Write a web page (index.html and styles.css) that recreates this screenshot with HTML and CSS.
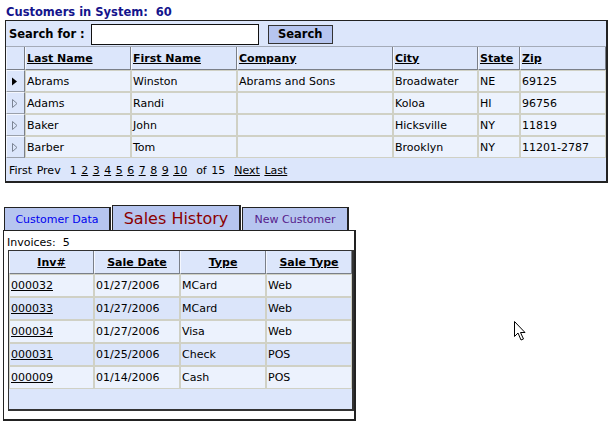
FILE: index.html
```html
<!DOCTYPE html>
<html>
<head>
<meta charset="utf-8">
<title>Customers</title>
<link rel="stylesheet" href="styles.css">
</head>
<body>
<div class="page">
  <div class="title">Customers in System:&nbsp; 60</div>
  <div class="grid">
    <div class="search">
      <span class="search-label">Search for :</span>
      <span class="search-input"></span>
      <span class="search-btn">Search</span>
    </div>
    <table class="cust">
      <colgroup>
        <col class="w-sel"><col class="w-last"><col class="w-first"><col class="w-company"><col class="w-city"><col class="w-state"><col class="w-zip">
      </colgroup>
      <thead>
        <tr><th class="sel"></th><th><u>Last Name</u></th><th><u>First Name</u></th><th><u>Company</u></th><th><u>City</u></th><th><u>State</u></th><th><u>Zip</u></th></tr>
      </thead>
      <tbody>
        <tr><td class="sel"><svg class="tri" width="6" height="9" viewBox="0 0 6 9"><polygon points="0,0.5 5,4.5 0,8.5" fill="#000"/></svg></td><td>Abrams</td><td>Winston</td><td>Abrams and Sons</td><td>Broadwater</td><td>NE</td><td>69125</td></tr>
        <tr><td class="sel"><svg class="tri" width="6" height="9" viewBox="0 0 6 9"><polygon points="0.5,0.5 5,4.5 0.5,8.5" fill="none" stroke="#7c8494"/></svg></td><td>Adams</td><td>Randi</td><td></td><td>Koloa</td><td>HI</td><td>96756</td></tr>
        <tr><td class="sel"><svg class="tri" width="6" height="9" viewBox="0 0 6 9"><polygon points="0.5,0.5 5,4.5 0.5,8.5" fill="none" stroke="#7c8494"/></svg></td><td>Baker</td><td>John</td><td></td><td>Hicksville</td><td>NY</td><td>11819</td></tr>
        <tr><td class="sel"><svg class="tri" width="6" height="9" viewBox="0 0 6 9"><polygon points="0.5,0.5 5,4.5 0.5,8.5" fill="none" stroke="#7c8494"/></svg></td><td>Barber</td><td>Tom</td><td></td><td>Brooklyn</td><td>NY</td><td>11201-2787</td></tr>
      </tbody>
      <tfoot>
        <tr><td class="pager" colspan="7">First Prev&nbsp; 1 <u>2</u> <u>3</u> <u>4</u> <u>5</u> <u>6</u> <u>7</u> <u>8</u> <u>9</u> <u>10</u>&nbsp; of 15&nbsp; <u>Next</u> <u>Last</u></td></tr>
      </tfoot>
    </table>
  </div>

  <div class="tabs">
    <div class="tab tab-data">Customer Data</div>
    <div class="tab tab-active">Sales History</div>
    <div class="tab tab-new">New Customer</div>
  </div>
  <div class="panel">
    <div class="inv-count">Invoices:&nbsp; 5</div>
    <table class="inv">
      <colgroup><col class="w-inv"><col class="w-col"><col class="w-col"><col class="w-col"></colgroup>
      <thead>
        <tr><th><u>Inv#</u></th><th><u>Sale Date</u></th><th><u>Type</u></th><th><u>Sale Type</u></th></tr>
      </thead>
      <tbody>
        <tr><td><u>000032</u></td><td>01/27/2006</td><td>MCard</td><td>Web</td></tr>
        <tr class="alt"><td><u>000033</u></td><td>01/27/2006</td><td>MCard</td><td>Web</td></tr>
        <tr><td><u>000034</u></td><td>01/27/2006</td><td>Visa</td><td>Web</td></tr>
        <tr class="alt"><td><u>000031</u></td><td>01/25/2006</td><td>Check</td><td>POS</td></tr>
        <tr><td><u>000009</u></td><td>01/14/2006</td><td>Cash</td><td>POS</td></tr>
      </tbody>
      <tfoot>
        <tr><td colspan="4"></td></tr>
      </tfoot>
    </table>
  </div>
</div>
<svg class="cursor" width="13" height="21" viewBox="0 0 13 21"><path d="M0.5 0.5 L0.5 15.5 L4 12 L7 19 L9.5 18 L6.5 11.5 L11 11.5 Z" fill="#fff" stroke="#000" stroke-linejoin="miter"/></svg>
</body>
</html>
```

FILE: styles.css
```css
* { box-sizing: border-box; }
html, body { margin: 0; padding: 0; background: #fff; }
body {
  font-family: "DejaVu Sans", Verdana, sans-serif;
  font-size: 11px;
  color: #000;
  position: relative;
  width: 610px;
  height: 423px;
  overflow: hidden;
}
u { text-decoration: underline; }

.page { padding: 4px 0 0 5px; }

.title {
  font-weight: bold;
  font-size: 11.5px;
  color: #14148c;
  height: 16px;
  line-height: 16px;
  margin-left: 1px;
}

.grid {
  width: 603px;
  border: 1px solid #222;
  border-right-width: 2px;
  border-bottom-width: 2px;
  background: #dce6fb;
}

.search {
  display: flex;
  align-items: center;
  height: 26px;
  padding: 1px 0 0 3px;
  border-bottom: 1px solid #a4abb8;
}
.search-label {
  font-weight: bold;
  font-size: 11.5px;
  margin-right: 6px;
}
.search-input {
  width: 168px;
  height: 21px;
  background: #fff;
  border: 1px solid #111;
  margin-right: 9px;
}
.search-btn {
  width: 65px;
  height: 19px;
  line-height: 17px;
  text-align: center;
  font-weight: bold;
  font-size: 11.5px;
  background: #b6c5ef;
  border: 1px solid #333;
}

table { border-collapse: separate; border-spacing: 0; table-layout: fixed; }

.cust { width: 600px; }
.w-sel { width: 19px; }
.w-last { width: 106px; }
.w-first { width: 106px; }
.w-company { width: 156px; }
.w-city { width: 85px; }
.w-state { width: 42px; }
.w-zip { width: 86px; }

th {
  font-weight: bold;
  background: #dce6fb;
  padding: 0 0 0 1px;
  text-align: left;
  border-left: 1px solid #f4f7fe;
  border-right: 1px solid #7a7f88;
  border-bottom: 1px solid #7a7f88;
  white-space: nowrap;
}
.cust thead tr { height: 23px; }
.cust tbody tr { height: 22px; }
.cust tfoot tr { height: 23px; }

td {
  padding: 0 1px;
  border: 1px solid #d0d1c5;
  background: #ecf2fd;
  white-space: nowrap;
  overflow: hidden;
}
td.sel {
  background: #dce6fb;
  padding: 0 0 0 5px;
  border-color: #f4f7fe #7a7f88 #9aa0aa #f4f7fe;
}
.tri { display: block; }
td.pager {
  background: #dce6fb;
  border: none;
  padding-left: 3px;
  padding-top: 1px;
  word-spacing: 1px;
}

.tabs {
  display: flex;
  align-items: flex-end;
  margin-top: 22px;
  margin-left: -1px;
  height: 25px;
}
.tab {
  height: 23px;
  border: 1px solid #222;
  border-right-width: 2px;
  border-bottom: none;
  background: #b6c5ef;
  display: flex;
  align-items: center;
  justify-content: center;
  margin-right: 1px;
  white-space: nowrap;
}
.tab-data { width: 107px; color: #0000ee; }
.tab-active { width: 129px; height: 25px; color: #8b0000; font-size: 16px; }
.tab-new { width: 107px; color: #551a8b; }

.panel {
  width: 353px;
  height: 191px;
  margin-left: -2px;
  border: 1px solid #222;
  border-right-width: 2px;
  border-bottom-width: 2px;
  background: #fff;
  padding-top: 5px;
}
.inv-count {
  line-height: 13px;
  margin-left: 3px;
}
.inv {
  width: 346px;
  margin: 1px 0 0 4px;
  border: 1px solid #333;
  border-right-width: 2px;
  border-bottom-width: 2px;
}
.w-inv { width: 85px; }
.w-col { width: 86px; }
.inv th { text-align: center; padding: 0; }
.inv thead tr { height: 23px; }
.inv tbody tr { height: 23px; }
.inv tr.alt td { background: #dbe5fa; }
.inv tfoot tr { height: 20px; }
.inv tfoot td { background: #dce6fb; border: none; }

.cursor {
  position: absolute;
  left: 514px;
  top: 321px;
}
```
